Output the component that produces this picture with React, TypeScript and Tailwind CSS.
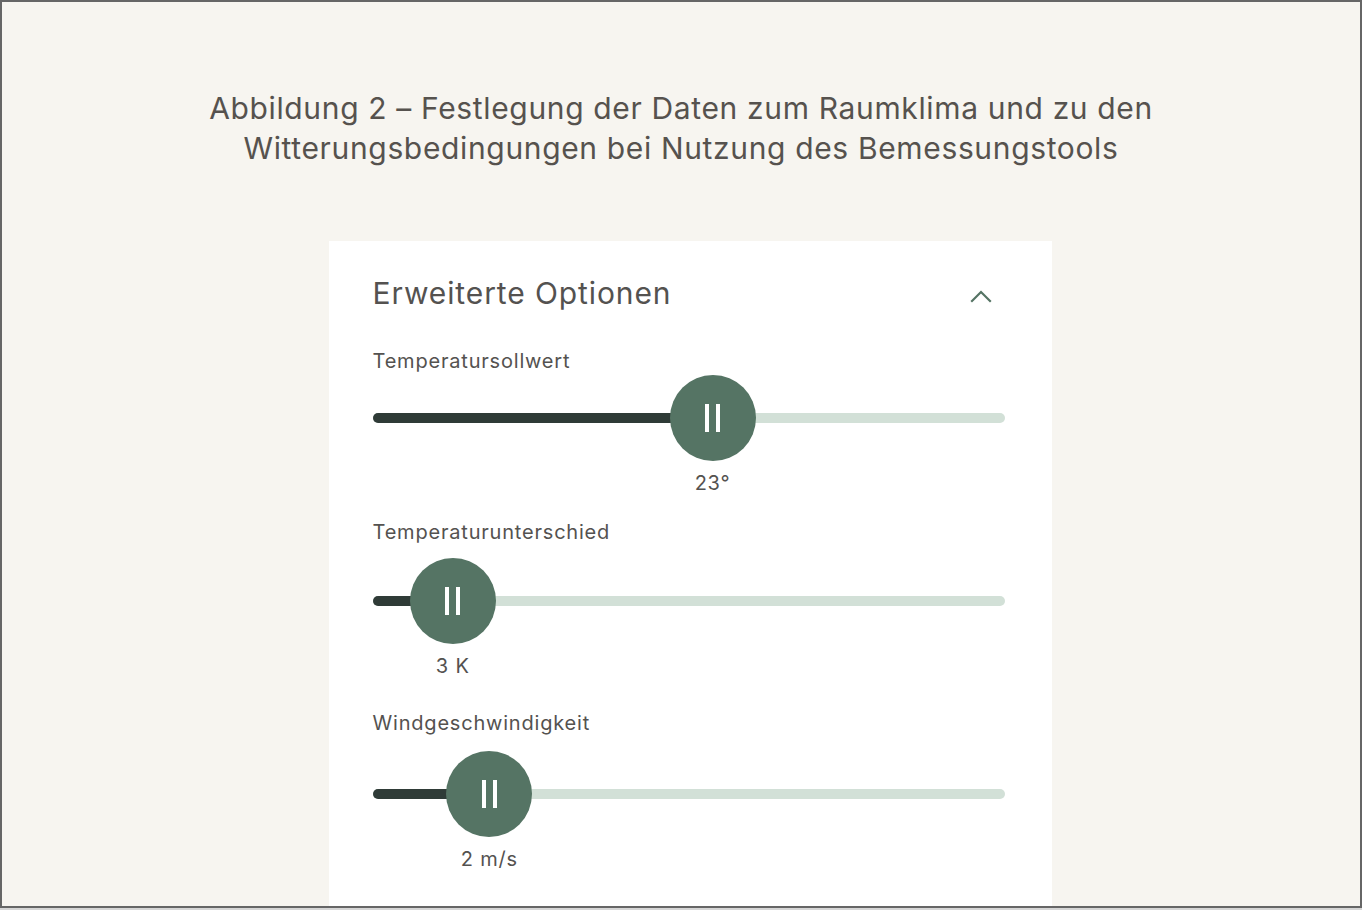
interface SliderSpec {
  label: string;
  value: string;
  pct: number;
  labelGap: string;
  blockGap: string;
}

const sliders: SliderSpec[] = [
  { label: 'Temperatursollwert', value: '23°', pct: 53.8, labelGap: 'mt-0', blockGap: 'mt-[34px]' },
  { label: 'Temperaturunterschied', value: '3 K', pct: 12.7, labelGap: 'mt-[12px]', blockGap: 'mt-[57px]' },
  { label: 'Windgeschwindigkeit', value: '2 m/s', pct: 18.5, labelGap: 'mt-[14px]', blockGap: 'mt-[65px]' },
];

function Slider({ spec }: { spec: SliderSpec }) {
  return (
    <div className={spec.blockGap}>
      <div className="text-[20px] leading-[28px] tracking-[0.8px] text-[#545250]">{spec.label}</div>
      <div className={`relative h-[86px] ${spec.labelGap}`}>
        <div className="absolute left-0 right-0 top-[38px] h-[10px] rounded-full bg-[#d2e0d7]" />
        <div
          className="absolute left-0 top-[38px] h-[10px] rounded-full bg-[#2f3b37]"
          style={{ width: `${spec.pct}%` }}
        />
        <div
          className="absolute top-0 flex h-[86px] w-[86px] -translate-x-1/2 items-center justify-center gap-[7px] rounded-full bg-[#557464]"
          style={{ left: `${spec.pct}%` }}
        >
          <span className="h-[28px] w-[4px] bg-white" />
          <span className="h-[28px] w-[4px] bg-white" />
        </div>
        <div
          className="absolute top-[94px] -translate-x-1/2 whitespace-nowrap text-[20px] leading-[28px] tracking-[0.8px] text-[#545250]"
          style={{ left: `${spec.pct}%` }}
        >
          {spec.value}
        </div>
      </div>
    </div>
  );
}

export default function App() {
  return (
    <div className="h-[910px] w-[1362px] overflow-hidden bg-[#d6d6d6] font-['Inter','Liberation_Sans',sans-serif]">
      <div className="flex h-[908px] w-[1362px] flex-col items-center overflow-hidden border-2 border-[#666666] bg-[#f7f5f0]">
        <h1 className="mt-[86px] text-center text-[30px] font-normal leading-[40px] tracking-[0.65px] text-[#56524e]">
          Abbildung 2 – Festlegung der Daten zum Raumklima und zu den
          <br />
          Witterungsbedingungen bei Nutzung des Bemessungstools
        </h1>
        <div className="ml-[18px] mt-[73px] w-[723px] flex-1 bg-white pl-[44px] pr-[47px] pt-[32px]">
          <div className="flex items-center justify-between">
            <h2 className="text-[30px] font-normal leading-[40px] tracking-[0.9px] text-[#545250]">Erweiterte Optionen</h2>
            <svg
              width="24"
              height="16"
              viewBox="0 0 24 16"
              className="mr-[12px] mt-[6px]"
              fill="none"
              stroke="#557464"
              strokeWidth="2.2"
              strokeLinecap="square"
            >
              <polyline points="3,13 12,4 21,13" />
            </svg>
          </div>
          {sliders.map((s) => (
            <Slider key={s.label} spec={s} />
          ))}
        </div>
      </div>
    </div>
  );
}
